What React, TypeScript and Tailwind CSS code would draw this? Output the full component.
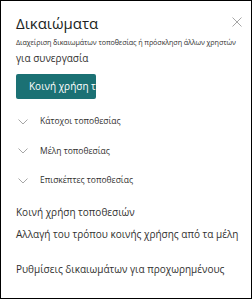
import React from "react";

const Chevron = () => (
  <svg width="10" height="6" viewBox="0 0 10 6" className="shrink-0">
    <path d="M0.5 0.5 L5 5 L9.5 0.5" fill="none" stroke="#a6a6a6" strokeWidth="1" />
  </svg>
);

export default function App() {
  const font = { fontFamily: '"Open Sans", "Liberation Sans", sans-serif' };
  return (
    <div className="w-[252px] h-[299px] bg-white border border-black overflow-hidden relative text-[#323130]" style={font}>
      <button className="absolute right-[8px] top-[15px] w-[12px] h-[12px] flex items-center justify-center">
        <svg width="10" height="10" viewBox="0 0 10 10">
          <path d="M0.5 0.5 L9.5 9.5 M9.5 0.5 L0.5 9.5" stroke="#a6a6a6" strokeWidth="1" />
        </svg>
      </button>
      <div className="pl-[15px] pr-[8px] pt-[12px] flex flex-col">
        <div className="text-[15px] leading-[20px] text-[#201f1e]">Δικαιώματα</div>
        <div className="mt-[4px] text-[7.2px] leading-[10px] whitespace-nowrap tracking-[-0.1px]">
          Διαχείριση δικαιωμάτων τοποθεσίας ή πρόσκληση άλλων χρηστών
        </div>
        <div className="mt-[4px] text-[10px] leading-[14px]">για συνεργασία</div>
        <div className="mt-[9px] w-[80px] h-[25px] bg-[#1b7174] rounded-[2px] overflow-hidden flex items-center pl-[13px]">
          <span className="text-white text-[10px] whitespace-nowrap">Κοινή χρήση τ</span>
        </div>
        <div className="mt-[8px] flex flex-col">
          {["Κάτοχοι τοποθεσίας", "Μέλη τοποθεσίας", "Επισκέπτες τοποθεσίας"].map((t) => (
            <div key={t} className="h-[29.5px] flex items-center gap-[12px] pl-[2px]">
              <Chevron />
              <span className="text-[8.5px] text-[#323130]">{t}</span>
            </div>
          ))}
        </div>
        <div className="mt-[9px] text-[10px] leading-[14px]">Κοινή χρήση τοποθεσιών</div>
        <div className="mt-[8px] text-[10px] leading-[14px] whitespace-nowrap">Αλλαγή του τρόπου κοινής χρήσης από τα μέλη</div>
        <div className="mt-[21px] text-[10px] leading-[14px] whitespace-nowrap">Ρυθμίσεις δικαιωμάτων για προχωρημένους</div>
      </div>
    </div>
  );
}
